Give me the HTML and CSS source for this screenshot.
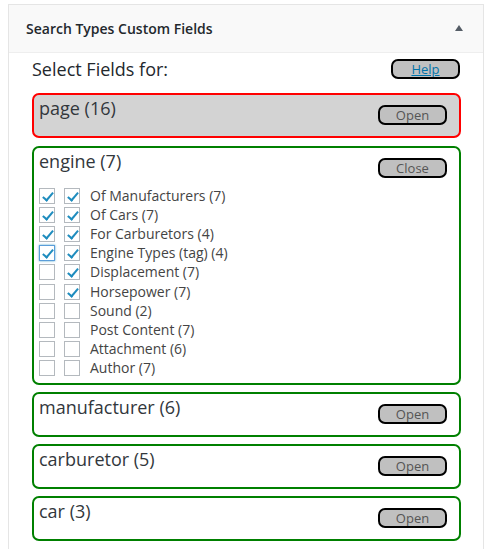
FILE: index.html
```html
<!DOCTYPE html>
<html>
<head>
<meta charset="utf-8">
<link rel="stylesheet" href="styles.css">
</head>
<body>
<div class="panel">
  <div class="panel-head">
    <h2 class="panel-title">Search Types Custom Fields</h2>
    <span class="toggle"></span>
  </div>
  <div class="panel-body">
    <div class="top-row">
      <h3 class="select-title">Select Fields for:</h3>
      <span class="btn"><a href="#" class="help">Help</a></span>
    </div>

    <div class="box box-red">
      <div class="box-head">
        <h3 class="box-title">page (16)</h3>
        <span class="btn">Open</span>
      </div>
    </div>

    <div class="box box-green">
      <div class="box-head">
        <h3 class="box-title">engine (7)</h3>
        <span class="btn">Close</span>
      </div>
      <ul class="fields">
        <li class="field"><span class="cb on"></span><span class="cb on"></span><span class="lbl">Of Manufacturers (7)</span></li>
        <li class="field"><span class="cb on"></span><span class="cb on"></span><span class="lbl">Of Cars (7)</span></li>
        <li class="field"><span class="cb on"></span><span class="cb on"></span><span class="lbl">For Carburetors (4)</span></li>
        <li class="field"><span class="cb on focus"></span><span class="cb on"></span><span class="lbl">Engine Types (tag) (4)</span></li>
        <li class="field"><span class="cb"></span><span class="cb on"></span><span class="lbl">Displacement (7)</span></li>
        <li class="field"><span class="cb"></span><span class="cb on"></span><span class="lbl">Horsepower (7)</span></li>
        <li class="field"><span class="cb"></span><span class="cb"></span><span class="lbl">Sound (2)</span></li>
        <li class="field"><span class="cb"></span><span class="cb"></span><span class="lbl">Post Content (7)</span></li>
        <li class="field"><span class="cb"></span><span class="cb"></span><span class="lbl">Attachment (6)</span></li>
        <li class="field"><span class="cb"></span><span class="cb"></span><span class="lbl">Author (7)</span></li>
      </ul>
    </div>

    <div class="box box-green">
      <div class="box-head">
        <h3 class="box-title">manufacturer (6)</h3>
        <span class="btn">Open</span>
      </div>
    </div>

    <div class="box box-green">
      <div class="box-head">
        <h3 class="box-title">carburetor (5)</h3>
        <span class="btn">Open</span>
      </div>
    </div>

    <div class="box box-green">
      <div class="box-head">
        <h3 class="box-title">car (3)</h3>
        <span class="btn">Open</span>
      </div>
    </div>
  </div>
</div>
</body>
</html>
```

FILE: styles.css
```css
html, body {
  margin: 0;
  padding: 0;
  background: #ffffff;
}
body {
  font-family: "Open Sans", "Noto Sans", sans-serif;
  color: #444444;
  overflow: hidden;
}
.panel {
  margin: 4px 8px 0 8px;
  border: 1px solid #e5e5e5;
  border-bottom: none;
  height: 560px;
  background: #ffffff;
}
.panel-head {
  height: 47px;
  background: #f9f9f9;
  border-bottom: 1px solid #eeeeee;
  display: flex;
  align-items: center;
  justify-content: space-between;
  padding: 0 20px 0 17px;
}
.panel-title {
  margin: 0;
  font-size: 14px;
  font-weight: 600;
  color: #23282d;
}
.toggle {
  width: 0;
  height: 0;
  border-left: 4.5px solid transparent;
  border-right: 4.5px solid transparent;
  border-bottom: 6px solid #555d66;
  margin-top: -2px;
}
.panel-body {
  padding: 4px 22px 0 23px;
}
.top-row {
  display: flex;
  justify-content: space-between;
  align-items: flex-start;
  height: 36px;
  padding-right: 1px;
}
.select-title {
  margin: 0;
  font-size: 18px;
  font-weight: 400;
  line-height: 24px;
  color: #23282d;
}
.btn {
  box-sizing: border-box;
  width: 69px;
  height: 20px;
  border: 2px solid #000000;
  border-radius: 7px;
  background: #c0c0c0;
  font-size: 13px;
  line-height: 16px;
  text-align: center;
  color: #555555;
}
.top-row .btn {
  margin-top: 2px;
}
.help {
  color: #0073aa;
  text-decoration: underline;
}
.box {
  border: 2px solid #008000;
  border-radius: 7px;
  padding: 0 12px 0 5px;
  margin-bottom: 7px;
}
.box-red {
  border-color: #ff0000;
  background: #d3d3d3;
  margin-bottom: 8px;
}
.box-head {
  display: flex;
  justify-content: space-between;
  align-items: flex-start;
  height: 41px;
}
.box-title {
  margin: 0;
  padding-top: 1px;
  font-size: 18px;
  font-weight: 400;
  line-height: 24px;
  color: #32373c;
}
.box-head .btn {
  margin-top: 10px;
}
.fields {
  list-style: none;
  margin: -3px 0 0 0;
  padding: 0 0 5px 0;
}
.field {
  display: flex;
  align-items: center;
  height: 19.2px;
  font-size: 14px;
  color: #444444;
}
.cb {
  box-sizing: border-box;
  width: 16px;
  height: 16px;
  border: 1px solid #b4b9be;
  background: #ffffff;
  margin-right: 9px;
  position: relative;
  flex: none;
}
.cb + .cb {
  margin-right: 10px;
}
.cb.focus {
  border-color: #5b9dd9;
  box-shadow: 0 0 2px rgba(30, 140, 190, 0.8);
}
.cb.on::after {
  content: "";
  position: absolute;
  left: 5px;
  top: 1px;
  width: 4px;
  height: 9px;
  border-right: 2.5px solid #1e8cbe;
  border-bottom: 2.5px solid #1e8cbe;
  transform: rotate(40deg);
}
.lbl {
  line-height: 18px;
}
```
